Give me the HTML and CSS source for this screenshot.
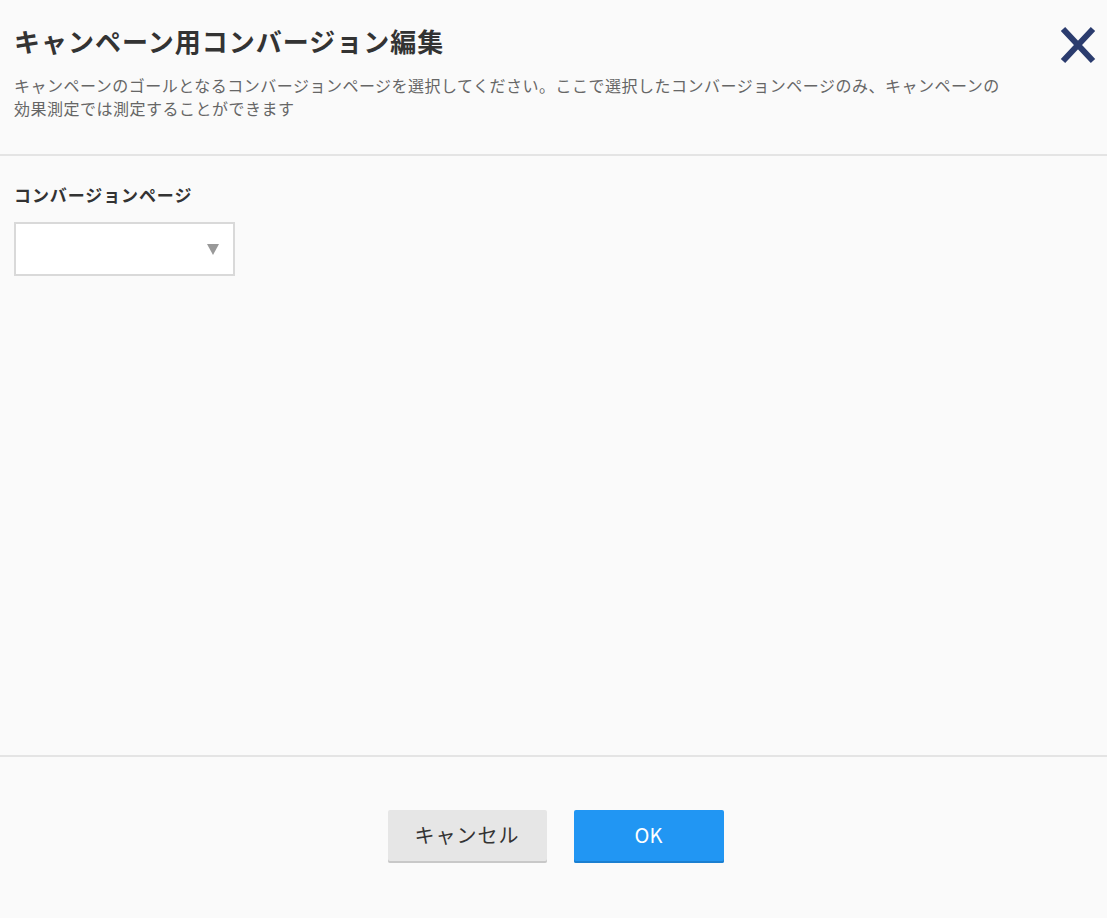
FILE: index.html
```html
<!DOCTYPE html>
<html lang="ja">
<head>
    <meta charset="UTF-8">
    <meta name="viewport" content="width=device-width, initial-scale=1.0">
    <title>キャンペーン用コンバージョン編集</title>
    <link rel="stylesheet" href="styles.css">
</head>
<body>
    <div class="dialog">
        <div class="dialog-header">
            <h1>キャンペーン用コンバージョン編集</h1>
            <p class="description">キャンペーンのゴールとなるコンバージョンページを選択してください。ここで選択したコンバージョンページのみ、キャンペーンの効果測定では測定することができます</p>
            <button class="close" type="button" aria-label="閉じる">
                <svg width="36" height="38" viewBox="0 0 36 38">
                    <path d="M3 3 L33 35 M33 3 L3 35" stroke="#2b3c6e" stroke-width="6" fill="none"/>
                </svg>
            </button>
        </div>

        <div class="dialog-body">
            <label class="field-label" for="conversion">コンバージョンページ</label>
            <div class="select-box">
                <select id="conversion"></select>
                <span class="arrow"></span>
            </div>
        </div>

        <div class="dialog-footer">
            <button class="btn btn-cancel" type="button">キャンセル</button>
            <button class="btn btn-ok" type="button">OK</button>
        </div>
    </div>
</body>
</html>
```

FILE: styles.css
```css
html, body {
    margin: 0;
    padding: 0;
    height: 100%;
}

body {
    font-family: "Noto Sans CJK JP", "Noto Sans", sans-serif;
    background-color: #fafafa;
    color: #333;
}

.dialog {
    display: flex;
    flex-direction: column;
    height: 918px;
}

.dialog-header {
    position: relative;
    padding: 22px 14px 0;
    height: 132px;
    border-bottom: 2px solid #e4e4e4;
}

h1 {
    margin: 0;
    font-size: 26px;
    line-height: 38px;
    font-weight: bold;
    letter-spacing: 1px;
    color: #333;
}

.description {
    margin: 14px 0 0;
    max-width: 1000px;
    font-size: 16px;
    line-height: 23px;
    letter-spacing: 0.5px;
    color: #666;
}

.close {
    position: absolute;
    top: 26px;
    right: 11px;
    padding: 0;
    border: none;
    background: none;
    cursor: pointer;
    line-height: 0;
}

.dialog-body {
    flex: 1;
    padding: 24px 14px 0;
}

.field-label {
    display: block;
    font-size: 17px;
    line-height: 30px;
    font-weight: bold;
    letter-spacing: 0.9px;
    color: #333;
}

.select-box {
    position: relative;
    margin-top: 12px;
    width: 221px;
    height: 54px;
    box-sizing: border-box;
    border: 2px solid #d9d9d9;
    background-color: #fff;
}

.select-box select {
    width: 100%;
    height: 100%;
    border: none;
    background: transparent;
    appearance: none;
    outline: none;
}

.arrow {
    position: absolute;
    top: 20px;
    right: 14px;
    width: 0;
    height: 0;
    border-left: 6px solid transparent;
    border-right: 6px solid transparent;
    border-top: 11px solid #999;
    pointer-events: none;
}

.dialog-footer {
    display: flex;
    justify-content: center;
    gap: 27px;
    padding: 53px 0 0 4px;
    height: 108px;
    border-top: 2px solid #e4e4e4;
}

.btn {
    height: 53px;
    border: none;
    border-radius: 2px;
    font-family: inherit;
    font-size: 20px;
    line-height: 49px;
    padding: 0 0 4px;
    cursor: pointer;
}

.btn-cancel {
    width: 159px;
    background-color: #e6e6e6;
    color: #333;
    letter-spacing: 1px;
    box-shadow: inset 0 -2px 0 #c8c8c8;
}

.btn-ok {
    width: 150px;
    background-color: #2196f3;
    color: #fff;
    box-shadow: inset 0 -2px 0 #1b7fd0;
}
```
